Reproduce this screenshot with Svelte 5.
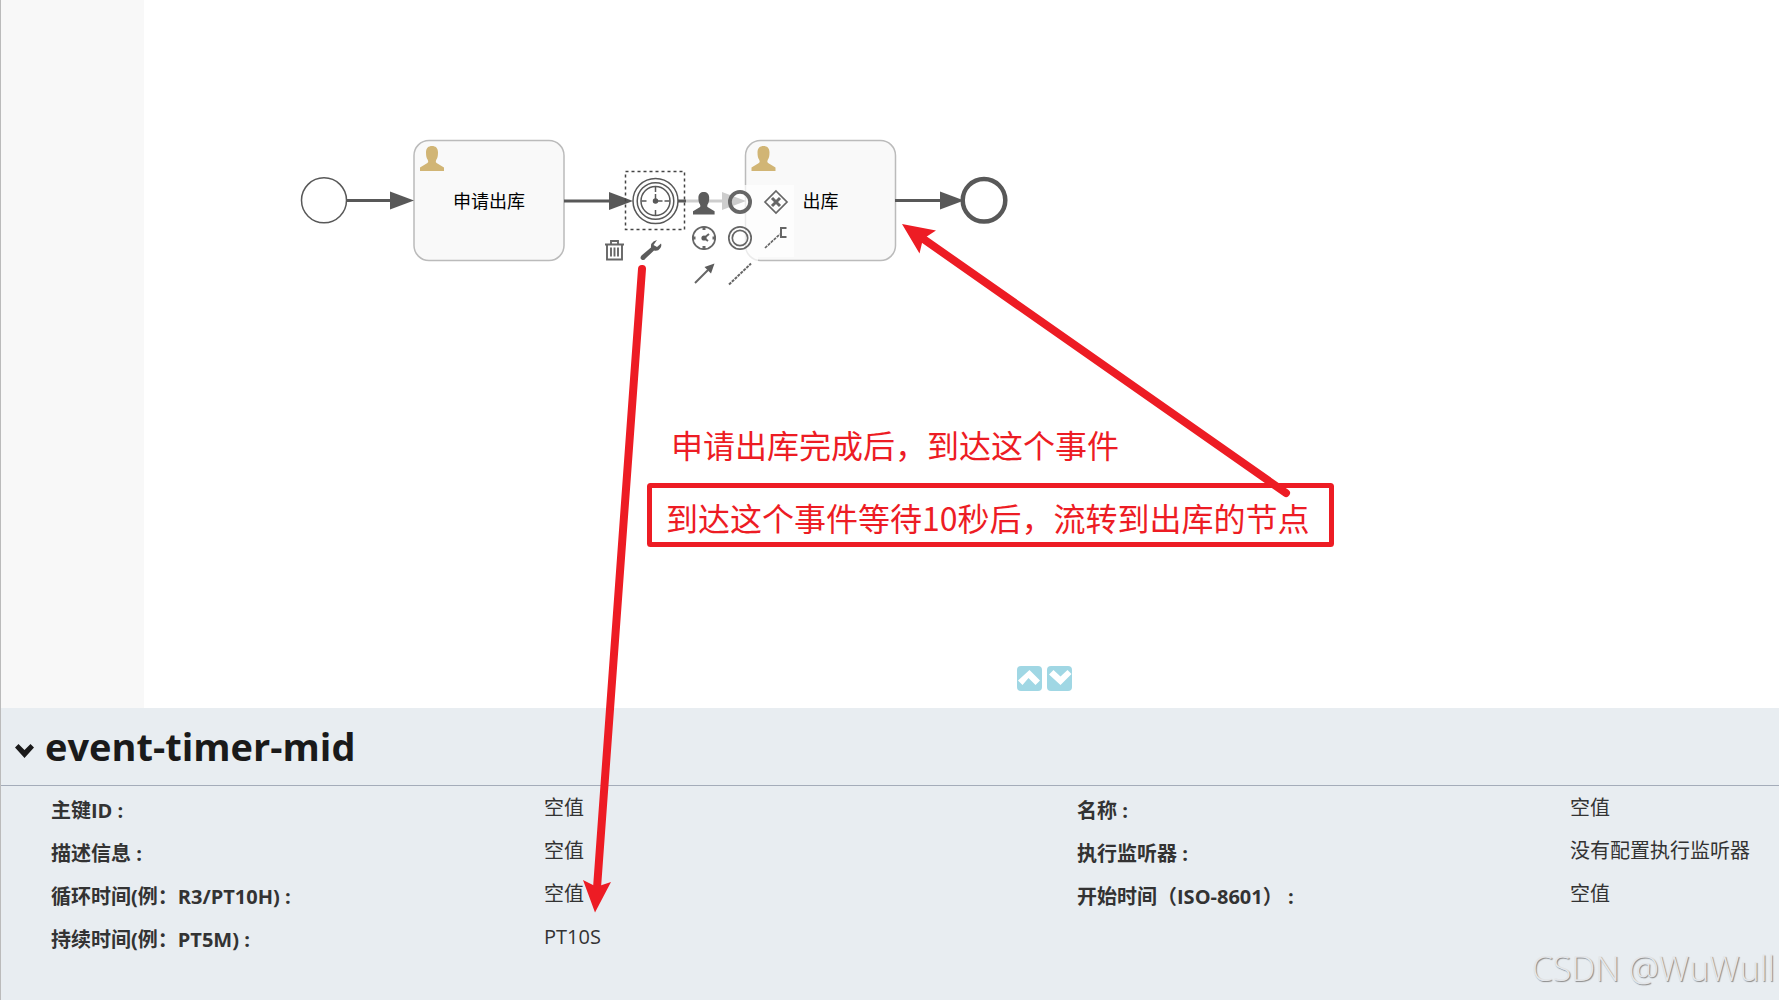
<script lang="ts">
  interface Property {
    label: string;
    value: string;
  }

  interface PadEntry {
    title: string;
    icon: string;
    col: number;
    row: number;
  }

  const userPath =
    'M0 25v-3.5l7.4-4.6c.7-.4.9-1 .7-1.9l-.4-1.3C6.6 12.4 6 10 6 6.5 6 2 8.5 0 12 0s6 2 6 6.5c0 3.5-.6 5.9-1.7 7.200l-.4 1.3c-.2.9 0 1.5.7 1.9L24 21.5V25Z';

  const properties: Property[] = [
    { label: '主键ID', value: '空值' },
    { label: '名称', value: '空值' },
    { label: '描述信息', value: '空值' },
    { label: '执行监听器', value: '没有配置执行监听器' },
    { label: '循环时间(例：R3/PT10H)', value: '空值' },
    { label: '开始时间（ISO-8601）', value: '空值' },
    { label: '持续时间(例：PT5M)', value: 'PT10S' },
  ];

  const padEntries: PadEntry[] = [
    { title: 'User task', icon: 'user', col: 1, row: 1 },
    { title: 'End event', icon: 'end', col: 2, row: 1 },
    { title: 'Exclusive gateway', icon: 'gateway', col: 3, row: 1 },
    { title: 'Timer event', icon: 'timer', col: 1, row: 2 },
    { title: 'Throw event', icon: 'throw', col: 2, row: 2 },
    { title: 'Text annotation', icon: 'annotation', col: 3, row: 2 },
    { title: 'Sequence flow', icon: 'flow', col: 1, row: 3 },
    { title: 'Association', icon: 'association', col: 2, row: 3 },
  ];

  const tasks = [
    { x: 414, name: '申请出库' },
    { x: 745.5, name: '出库' },
  ];

  const flows = [
    { from: 347, to: 414, y: 200.5 },
    { from: 564, to: 633, y: 201 },
    { from: 678, to: 746, y: 201 },
    { from: 895, to: 964, y: 200.5 },
  ];

  let open = $state(true);
</script>

<div class="editor">
  <div class="workspace">
    <aside class="palette"></aside>
    <main class="canvas"></main>

    <svg class="diagram" width="1100" height="400" aria-label="process diagram">
      <circle class="event" cx="324" cy="200.3" r="22.5" />
      <circle class="event end" cx="984" cy="200.3" r="21.3" />

      {#each tasks as task}
        <rect class="task" x={task.x} y="140.5" width="150" height="120" rx="15" />
        <path class="task-icon" transform="translate({task.x + 6} 146)" d={userPath} />
        <text class="task-name" x={task.x + 75} y="208">{task.name}</text>
      {/each}

      {#each flows as flow}
        <path class="line" d="M{flow.from} {flow.y}H{flow.to - 20}" />
        <path class="head" d="M{flow.to - 24} {flow.y - 9}L{flow.to} {flow.y}L{flow.to - 24} {flow.y + 9}Z" />
      {/each}

      <g class="event">
        <circle cx="655.5" cy="201" r="22.5" />
        <circle cx="655.5" cy="201" r="18.3" />
        <circle cx="655.5" cy="201" r="14.5" />
        <path d="M655.5 187v5M655.5 210v5M641.5 201h5M664.5 201h5M655.5 194v7h7" />
        <circle class="head" cx="655.5" cy="201" r="2" />
      </g>
      <rect class="selection" x="625.5" y="171.5" width="59" height="58" />
    </svg>

    <div class="pad pad-append">
      {#each padEntries as entry}
        <button title={entry.title} aria-label={entry.title} style="grid-area: {entry.row} / {entry.col}">
          <svg width="36" height="36" viewBox="-18 -18 36 36">
            {#if entry.icon === 'user'}
              <path class="solid" transform="translate(-11 -11) scale(.9)" d={userPath} />
            {:else if entry.icon === 'end'}
              <circle r="10.1" cy="-1" stroke-width="3.8" />
            {:else if entry.icon === 'gateway'}
              <path d="M0-12 11-1 0 10-11-1Z" />
              <path d="M-4-5 4 3M4-5-4 3" stroke-width="3" />
            {:else if entry.icon === 'timer'}
              <circle r="11.2" cy="-1" />
              <path d="M0-12.5v3.5M0 7v3.5M-12-1h3.5M8.5-1H12" stroke-width="3" />
              <path d="M0-1 5-5M0-1 4 2" stroke-width="2" />
              <circle class="solid" r="2.6" cy="-1" />
            {:else if entry.icon === 'throw'}
              <circle r="11.2" cy="-1" />
              <circle r="7.7" cy="-1" />
            {:else if entry.icon === 'annotation'}
              <path d="M-11 9 4-5" stroke-dasharray="3 1" />
              <path d="M10.5-11H5v9h5.5" stroke-width="2" />
            {:else if entry.icon === 'flow'}
              <path d="M-9 8 4-5" stroke-width="2" />
              <path class="solid" d="M10.5-11.5 7-1.5 .5-8Z" />
            {:else}
              <path d="M-11 9.5 11-11.5" stroke-width="2" stroke-dasharray="3 1" />
            {/if}
          </svg>
        </button>
      {/each}
    </div>

    <div class="pad pad-edit">
      <button title="Delete" aria-label="Delete">
        <svg width="36" height="36" viewBox="-18 -18 36 36">
          <path d="M-10-5.5H9M-4-6v-3h7v3M-8-5V9.500h15V-5M-4-2.500v9M-.5-2.500v9M3-2.500v9" stroke-width="1.9" />
        </svg>
      </button>
      <button title="Change type" aria-label="Change type">
        <svg width="36" height="36" viewBox="-18 -18 36 36">
          <path
            class="solid"
            d="M6-10 2.5-8.500Q-.5-6.500 0-2.500L-9.500 5.500Q-11.500 8-9.500 9.500-7 11-5.500 8.500L3 .5Q7 1.5 9-1.500 11-4 10-6.500L6-3 2.5-5Z"
          />
        </svg>
      </button>
    </div>

    <div class="resizer">
      <button aria-label="Expand properties">
        <svg width="25" height="25" viewBox="0 0 25 25"><path d="M12.500 4 23 14.500 18.500 19l-7-7-6 7L1 14.500Z" /></svg>
      </button>
      <button aria-label="Collapse properties">
        <svg width="25" height="25" viewBox="0 0 25 25"><path d="M2 8.500 6.500 4l7 6.500L20.500 4 24.500 8 13.500 19Z" /></svg>
      </button>
    </div>
  </div>

  <section class="properties">
    <h3>
      <button aria-expanded={open} onclick={() => (open = !open)}>
        <svg width="19" height="16" viewBox="0 0 19 16"><path d="M0 4.500 3.500 1l6 6 6-6L19 4.500 9.500 15Z" /></svg>
        <span>event-timer-mid</span>
      </button>
    </h3>
    {#if open}
      <dl>
        {#each properties as property}
          <dt>{property.label}&nbsp;:</dt>
          <dd>{property.value}</dd>
        {/each}
      </dl>
    {/if}
  </section>

  <svg class="notes">
    <rect x="649.5" y="485.5" width="682" height="59" rx="1" />
    <path class="shaft" d="M642 269 597 888M1286 493 922 238" />
    <path class="tip" d="M595 912.5 583 880l12 6h4l12-4Z" />
    <path class="tip" d="M902 224l34 6.500-10 6.500-4 6-2.500 10.500Z" />
    <text x="671" y="458">申请出库完成后，到达这个事件</text>
    <text x="666" y="531">到达这个事件等待10秒后，流转到出库的节点</text>
  </svg>

  <div class="watermark">CSDN @WuWull</div>
</div>

<style>
  :global(body) {
    background: #fff;
    color: #333;
    font-family: 'Open Sans', 'Noto Sans CJK SC', sans-serif;
  }

  .editor {
    position: relative;
    display: flex;
    flex-direction: column;
    min-height: 100vh;
    box-sizing: border-box;
    border-left: 1px solid #bbb;
    overflow: hidden;
  }

  .workspace {
    position: relative;
    display: flex;
    flex: 1;
    min-height: 400px;
  }

  .palette {
    width: 143px;
    background: #f8f8f8;
  }

  .canvas {
    flex: 1;
    background: #fff;
  }

  .diagram {
    position: absolute;
    top: 0;
    left: -1px;
  }

  .event {
    fill: none;
    stroke: #585858;
    stroke-width: 1.5;
  }

  .event.end {
    stroke-width: 4.5;
  }

  .task {
    fill: #f9f9f9;
    stroke: #bbb;
    stroke-width: 1.5;
  }

  .task-icon {
    fill: #d1b575;
  }

  .task-name {
    font-family: 'Noto Sans CJK SC', sans-serif;
    font-size: 18px;
    text-anchor: middle;
    fill: #000;
  }

  .line {
    stroke: #585858;
    stroke-width: 3;
  }

  .head {
    fill: #585858;
  }

  .selection {
    fill: none;
    stroke: #444;
    stroke-width: 1.5;
    stroke-dasharray: 3 3;
  }

  .pad {
    position: absolute;
    display: grid;
  }

  .pad-append {
    top: 185px;
    left: 685px;
    grid-template: repeat(3, 36px) / repeat(3, 36px);
  }

  .pad-edit {
    top: 232px;
    left: 596px;
    grid-template: 36px / 36px 36px;
  }

  .pad button {
    padding: 0;
    border: 0;
    background: rgba(255, 255, 255, 0.7);
    cursor: pointer;
  }

  .pad svg {
    display: block;
    fill: none;
    stroke: #666;
    stroke-width: 1.7;
  }

  .pad .solid {
    fill: #5c5c5c;
    stroke: none;
  }

  .resizer {
    position: absolute;
    bottom: 17px;
    left: 57.14%;
    display: flex;
    gap: 5px;
  }

  .resizer button {
    padding: 0;
    border: 0;
    border-radius: 4px;
    background: #a0d7e4;
    cursor: pointer;
  }

  .resizer svg {
    display: block;
    fill: #fff;
  }

  .properties {
    padding-bottom: 39px;
    background: #e8edf1;
  }

  h3 {
    margin: 0;
    border-bottom: 1px solid #a4acb9;
  }

  h3 button {
    display: flex;
    align-items: center;
    gap: 11px;
    width: 100%;
    height: 77px;
    padding: 0 14px 2px;
    border: 0;
    background: none;
    color: #1a1a1a;
    font-family: inherit;
    font-size: 38px;
    font-weight: 700;
    line-height: 48px;
    cursor: pointer;
  }

  h3 svg {
    margin-top: 10px;
    fill: #1a1a1a;
  }

  dl {
    display: grid;
    grid-template-columns: 493fr 533fr 493fr 209fr;
    margin: 0;
    padding: 3px 0 0 50px;
    font-size: 20px;
    line-height: 28px;
    white-space: nowrap;
  }

  dt {
    padding: 8px 0 7px;
    font-weight: 700;
  }

  dd {
    margin: 0;
    padding: 5px 0 10px;
  }

  .notes {
    position: absolute;
    top: 0;
    left: -1px;
    width: 100%;
    height: 100%;
    pointer-events: none;
  }

  .notes rect {
    fill: none;
    stroke: #ed1c24;
    stroke-width: 5;
  }

  .notes .shaft {
    fill: none;
    stroke: #ed1c24;
    stroke-width: 8;
    stroke-linecap: round;
  }

  .notes .tip {
    fill: #ed1c24;
  }

  .notes text {
    font-family: 'Noto Sans CJK SC', sans-serif;
    font-size: 32px;
    fill: #ed1c24;
  }

  .watermark {
    position: absolute;
    right: 4px;
    bottom: 10px;
    color: #e4e6e9;
    font-size: 34px;
    font-weight: 300;
    line-height: 44px;
    text-shadow: 1px 1px 1px #888;
    pointer-events: none;
  }
</style>
